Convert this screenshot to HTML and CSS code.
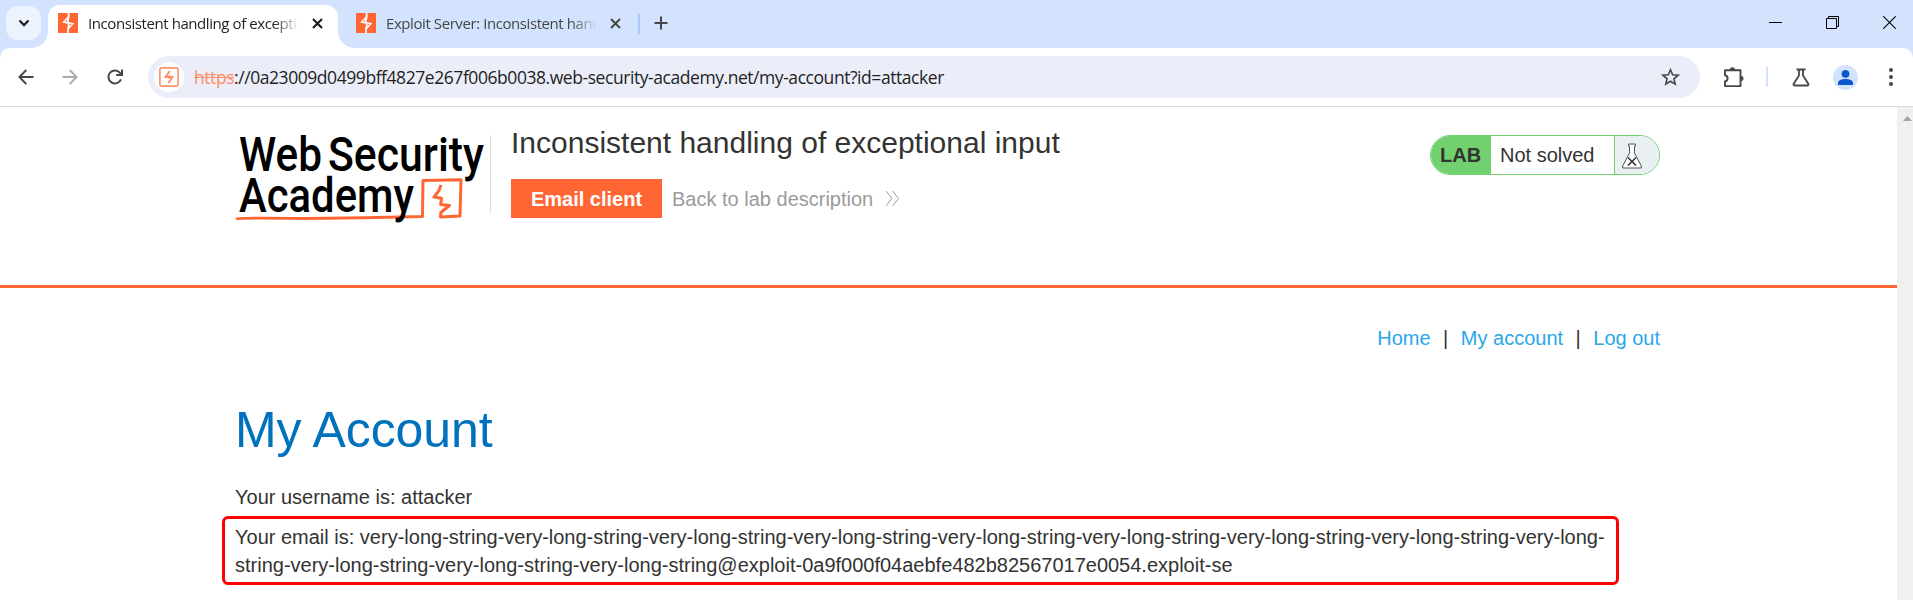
FILE: index.html
```html
<!DOCTYPE html>
<html lang="en">
<head>
<meta charset="utf-8">
<title>Inconsistent handling of exceptional input</title>
<link rel="stylesheet" href="styles.css">
</head>
<body>
<svg class="defs" width="0" height="0" aria-hidden="true">
  <symbol id="burp" viewBox="0 0 20 20">
    <rect width="20" height="20" fill="#ff6633"/>
    <path d="M10.500 0v4L5.700 9l5.300 1.200-1 5.300v4.500M10 20v-4l4.700-5.300-5.300-1.200 1.300-5V0" fill="none" stroke="#fff" stroke-width="1.600"/>
  </symbol>
</svg>
<div class="browser">
  <div class="tabstrip">
    <div class="tab-search"><svg width="12" height="8" viewBox="0 0 12 8"><path d="M1.500 1.500 6 6l4.500-4.500" fill="none" stroke="#1f1f1f" stroke-width="2.300"/></svg></div>
    <div class="tab tab-active">
      <svg class="favicon" width="20" height="20"><use href="#burp"/></svg>
      <span class="tab-title">Inconsistent handling of exceptional input</span>
      <svg class="tab-close" width="11" height="11" viewBox="0 0 11 11"><path d="M1 1l9 9M10 1l-9 9" stroke="#1f1f1f" stroke-width="2.200"/></svg>
    </div>
    <div class="tab tab-idle">
      <svg class="favicon" width="20" height="20"><use href="#burp"/></svg>
      <span class="tab-title tab-title-idle">Exploit Server: Inconsistent handling</span>
      <svg class="tab-close" width="11" height="11" viewBox="0 0 11 11"><path d="M1 1l9 9M10 1l-9 9" stroke="#444746" stroke-width="2"/></svg>
    </div>
    <div class="tab-divider"></div>
    <svg class="new-tab" width="14" height="14" viewBox="0 0 14 14"><path d="M7 .5v13M.5 7h13" stroke="#444746" stroke-width="2"/></svg>
    <div class="window-controls">
      <svg width="13" height="13" viewBox="0 0 13 13"><path d="M0 6.500h13" stroke="#000"/></svg>
      <svg width="13" height="13" viewBox="0 0 13 13" fill="none" stroke="#000"><path d="M.5 2.500h10v10H.5zM2.500 2.500v-2h10v10h-2"/></svg>
      <svg width="13" height="13" viewBox="0 0 13 13"><path d="M.3.300l12.400 12.400M12.700.300.300 12.700" stroke="#000" stroke-width="1.100"/></svg>
    </div>
  </div>
  <div class="toolbar">
    <svg width="16" height="16" viewBox="0 0 16 16" fill="none" stroke="#474747" stroke-width="1.900"><path d="M15.500 8H2M8.300 1 1.400 8l6.900 7"/></svg>
    <svg class="forward" width="16" height="16" viewBox="0 0 16 16" fill="none" stroke="#ababab" stroke-width="1.900"><path d="M.5 8H14M7.700 1l6.900 7-6.900 7"/></svg>
    <svg class="reload" width="16" height="16" viewBox="0 0 16 16" fill="none" stroke="#474747" stroke-width="2"><path d="M14 10.300A6.500 6.500 0 1 1 13.300 4.200L14.500 6M15 .5V6H9.200"/></svg>
    <div class="omnibox">
      <div class="site-icon"><svg width="20" height="20" viewBox="0 0 20 20"><rect x=".9" y=".9" width="18.200" height="18.200" rx="1.500" fill="none" stroke="#ff9068" stroke-width="1.600"/><path d="M10.800 4 6.500 9.800h3.300v1.700M9.300 16l4.200-5.800h-3.300V8.500" fill="none" stroke="#ff8355" stroke-width="1.700"/></svg></div>
      <div class="url"><span class="scheme">https</span>://0a23009d0499bff4827e267f006b0038.web-security-academy.net/my-account?id=attacker</div>
      <svg class="star" width="19" height="18" viewBox="0 0 19 18"><path d="M9.500 1.800l2.100 5 5.500.4-4.200 3.600 1.300 5.300-4.700-2.900-4.700 2.900 1.300-5.300L1.900 7.200l5.500-.4z" fill="none" stroke="#474747" stroke-width="1.600"/></svg>
    </div>
    <svg class="puzzle" width="21" height="21" viewBox="0 0 21 21"><path d="M2 3.300h15.500v15.800H2v-4.600c3.500-.5 3.500-5.800 0-6.300z" fill="none" stroke="#474747" stroke-width="1.900" stroke-linejoin="round"/><path d="M6.800 3a2.600 2.800 0 0 1 5.200 0zM17.500 8.800a3 2.700 0 0 1 0 5.400z" fill="#474747"/></svg>
    <div class="tool-divider"></div>
    <svg class="labs" width="18" height="19" viewBox="0 0 18 19" fill="none" stroke="#474747" stroke-width="1.800"><path d="M4.500 1.500h9M7 1.500v6L1.600 16q-.5 1.500 1 1.500h12.800q1.500 0 1-1.500L11 7.500v-6"/></svg>
    <svg class="profile" width="25" height="25" viewBox="0 0 25 25"><circle cx="12.500" cy="12.500" r="12.500" fill="#d3e3fd"/><circle cx="12.500" cy="8.800" r="3.900" fill="#0b57d0"/><path d="M5 20v-2c0-5.300 15-5.300 15 0v2z" fill="#0b57d0"/></svg>
    <svg class="menu" width="4" height="18" viewBox="0 0 4 18" fill="#474747"><circle cx="2" cy="2" r="2"/><circle cx="2" cy="9" r="2"/><circle cx="2" cy="16" r="2"/></svg>
  </div>
  <div class="viewport">
    <div class="page">
      <header class="lab-header">
        <div class="container header-row">
          <svg class="logo" width="256" height="90" viewBox="0 0 256 90">
            <path d="M1 84Q3 82.500 70 83.500 130 83 187.500 81.500L188 45.500 226 44.800 225 81 205.500 82 205.800 77.500 214.500 70.500 205.700 69.500 206.500 63.300 199 62 204 55.500 206 50" fill="none" stroke="#ff6633" stroke-width="3" stroke-linejoin="round"/>
            <g class="logo-text">
              <text x="4" y="36" textLength="83" lengthAdjust="spacingAndGlyphs">Web</text>
              <text x="93" y="36" textLength="156" lengthAdjust="spacingAndGlyphs">Security</text>
              <text x="4" y="77" textLength="175" lengthAdjust="spacingAndGlyphs">Academy</text>
            </g>
          </svg>
          <div class="title-block">
            <h2>Inconsistent handling of exceptional input</h2>
            <div class="actions">
              <a class="button">Email client</a>
              <a class="back">Back to lab description</a>
              <svg width="15" height="17" viewBox="0 0 15 17" fill="none" stroke="#9b9b9b"><path d="M1 1l6 7.500L1 16M7.500 1l6 7.500-6 7.500"/></svg>
            </div>
          </div>
          <div class="status">
            <span class="status-lab">LAB</span>
            <span class="status-text">Not solved</span>
            <span class="status-icon"><svg width="20" height="26" viewBox="0 0 20 26"><path d="M6.500 1h7v2h-1v7L19.300 23v2H.7v-2L7.500 10V3h-1z" fill="#fff" stroke="#555"/><path d="M6 14.500l8 8M14 14.500l-8 8" stroke="#333" stroke-width="1.600"/></svg></span>
          </div>
        </div>
      </header>
      <main class="container">
        <nav><a>Home</a><span>|</span><a>My account</a><span>|</span><a>Log out</a></nav>
        <h1>My Account</h1>
        <p class="username">Your username is: attacker</p>
        <p class="email">Your email is: very-long-string-very-long-string-very-long-string-very-long-string-very-long-string-very-long-string-very-long-string-very-long-string-very-long-string-very-long-string-very-long-string-very-long-string@exploit-0a9f000f04aebfe482b82567017e0054.exploit-se</p>
      </main>
    </div>
    <div class="scrollbar"><svg width="9" height="5" viewBox="0 0 9 5"><path d="M0 5 4.500 0 9 5z" fill="#a3a3a3"/></svg></div>
  </div>
</div>
</body>
</html>
```
FILE: styles.css
```css
* { box-sizing: border-box; }
body { margin: 0; overflow: hidden; font-family: "Liberation Sans", Arial, sans-serif; color: #333332; background: #fff; }
svg { display: block; flex: none; }
.defs { position: absolute; }
h1, h2, p { margin: 0; font-weight: 400; }
.browser { width: 1913px; height: 600px; display: flex; flex-direction: column; background: #d3e3fd; overflow: hidden; }

.tabstrip { height: 48px; display: flex; font-family: "Open Sans", "Noto Sans", sans-serif; font-size: 15px; }
.tab-search { width: 35px; height: 34px; margin: 6px 7px 0 6px; border-radius: 12px; background: #ecf3fe; display: flex; align-items: center; justify-content: center; flex: none; }
.tab { display: flex; align-items: center; height: 36px; flex: none; }
.tab-active { width: 290px; height: 43px; margin-top: 5px; padding: 0 15px 7px 10px; background: #fff; border-radius: 12px 12px 0 0; position: relative; }
.tab-active::before, .tab-active::after { content: ""; position: absolute; bottom: 0; width: 16px; height: 16px; }
.tab-active::before { left: -16px; background: radial-gradient(circle at 0 0, transparent 15.5px, #fff 16px); }
.tab-active::after { right: -16px; background: radial-gradient(circle at 100% 0, transparent 15.5px, #fff 16px); }
.tab-idle { margin: 5px 0 0 18px; width: 282px; padding-left: 0; }
.tab-title { width: 211px; margin-left: 10px; overflow: hidden; white-space: nowrap; line-height: 24px; color: #1f1f1f; letter-spacing: -0.42px; -webkit-mask-image: linear-gradient(90deg, #000 88%, transparent 100%); mask-image: linear-gradient(90deg, #000 88%, transparent 100%); }
.tab-title-idle { color: #444746; }
.tab-close { margin-left: 13px; }
.tab-divider { width: 2px; height: 20px; margin: 14px 0 0 0; background: #a8c7fa; }
.new-tab { margin: 16px 0 0 14px; }
.window-controls { margin: 16px 17px 0 auto; display: flex; gap: 44px; }

.toolbar { height: 58px; flex: none; display: flex; align-items: center; padding-left: 18px; background: #fff; border-radius: 10px 10px 0 0; }
.forward { margin-left: 28px; }
.reload { margin: 0 25px 0 29px; }
.omnibox { width: 1552px; height: 42px; border-radius: 21px; background: #ebeef8; display: flex; align-items: center; padding: 0 20px 0 6px; }
.site-icon { width: 30px; height: 30px; border-radius: 50%; background: #fff; display: flex; align-items: center; justify-content: center; }
.url { margin-left: 10px; font: 17.5px/24px "Open Sans", "Noto Sans", sans-serif; letter-spacing: -0.44px; color: #1f1f1f; white-space: nowrap; }
.scheme { color: #ff8f66; text-decoration: line-through; }
.star { margin-left: auto; }
.puzzle { margin-left: 23px; }
.tool-divider { width: 2px; height: 20px; margin: 0 24px 0 22px; background: #d3e3fd; }
.profile { margin-left: 23px; }
.menu { margin-left: 31px; }

.viewport { flex: 1; display: flex; border-top: 1px solid #dcdcdc; background: #fff; }
.page { width: 1897px; }
.scrollbar { width: 16px; background: #f0f0f0; display: flex; justify-content: center; padding: 9px 0 0 5px; }
.container { width: 1425px; margin-left: 235px; }
.lab-header { height: 181px; border-bottom: 3px solid #ff6633; }
.header-row { display: flex; align-items: flex-start; }
.logo { margin-top: 28px; background: linear-gradient(#dedede, #dedede) right 0 / 1px 78px no-repeat; }
.logo-text { font-family: Roboto, sans-serif; font-size: 49px; font-weight: 500; fill: #000; }
.title-block { margin: 19px 0 0 20px; }
.title-block h2 { font-size: 30px; line-height: 34px; white-space: nowrap; }
.actions { display: flex; align-items: center; margin-top: 19px; font-size: 20px; line-height: 41px; white-space: nowrap; }
.button { width: 151px; height: 39px; background: #ff6633; color: #fff; font-weight: 700; text-align: center; }
.back { height: 39px; margin: 0 12px 0 10px; color: #9b9b9b; }
.status { width: 230px; height: 40px; margin: 28px 0 0 auto; border: 1px solid #71d16f; border-radius: 20px; overflow: hidden; display: flex; font-size: 20px; line-height: 39px; }
.status-lab { width: 60px; background: #71d16f; font-weight: 700; padding-left: 9px; }
.status-text { width: 123px; padding-left: 9px; }
.status-icon { flex: 1; border-left: 1px solid #71d16f; background: #eaeff2; padding: 7px 0 0 7px; }

nav { display: flex; justify-content: flex-end; gap: 12.5px; margin-top: 36px; font-size: 20px; line-height: 28px; }
nav a { color: #29a7e8; }
h1 { margin-top: 48px; font-size: 50px; line-height: 60px; letter-spacing: -0.1px; color: #0071bc; }
.username { margin-top: 23px; font-size: 20px; line-height: 28px; }
.email { width: 1397px; margin: 5px 0 0 -13px; padding: 4px 10px 3px; border: 3px solid #f00; border-radius: 6px; font-size: 20px; line-height: 28px; }
```
